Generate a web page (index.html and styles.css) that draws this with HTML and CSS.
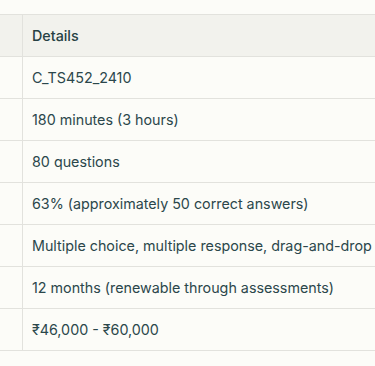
FILE: index.html
```html
<!DOCTYPE html>
<html lang="en">
<head>
    <meta charset="UTF-8">
    <meta name="viewport" content="width=device-width, initial-scale=1.0">
    <title>C_TS452_2410 Exam Details</title>
    <link rel="stylesheet" href="styles.css">
</head>
<body>
    <main>
        <div class="table-wrap">
            <table class="exam-table">
                <thead>
                    <tr>
                        <th>Parameter</th>
                        <th>Details</th>
                    </tr>
                </thead>
                <tbody>
                    <tr>
                        <td>Exam Code</td>
                        <td>C_TS452_2410</td>
                    </tr>
                    <tr>
                        <td>Duration</td>
                        <td>180 minutes (3 hours)</td>
                    </tr>
                    <tr>
                        <td>Questions</td>
                        <td>80 questions</td>
                    </tr>
                    <tr>
                        <td>Passing Score</td>
                        <td>63% (approximately 50 correct answers)</td>
                    </tr>
                    <tr>
                        <td>Format</td>
                        <td>Multiple choice, multiple response, drag-and-drop</td>
                    </tr>
                    <tr>
                        <td>Validity</td>
                        <td>12 months (renewable through assessments)</td>
                    </tr>
                    <tr>
                        <td>Exam Fee</td>
                        <td>₹46,000 - ₹60,000</td>
                    </tr>
                </tbody>
            </table>
        </div>
    </main>
</body>
</html>
```

FILE: styles.css
```css
body {
    margin: 0;
    background-color: #fcfcf8;
    font-family: Inter, "Noto Sans", sans-serif;
    color: #2b474b;
}

.table-wrap {
    padding-top: 14px;
    overflow: hidden;
}

/* table is scrolled sideways, only the edge of the label column shows */
.exam-table {
    width: max-content;
    border-collapse: collapse;
    margin-left: -168px;
    font-size: 14.3px;
    line-height: 23px;
    white-space: nowrap;
}

.exam-table th,
.exam-table td {
    border: 1px solid #e2e2dd;
    padding: 9px 40px 9px 9px;
    text-align: left;
}

.exam-table th:first-child,
.exam-table td:first-child {
    width: 171px;
    padding-right: 9px;
}

.exam-table th {
    background-color: #f2f2ed;
    font-weight: 500;
    color: #264144;
}
```
